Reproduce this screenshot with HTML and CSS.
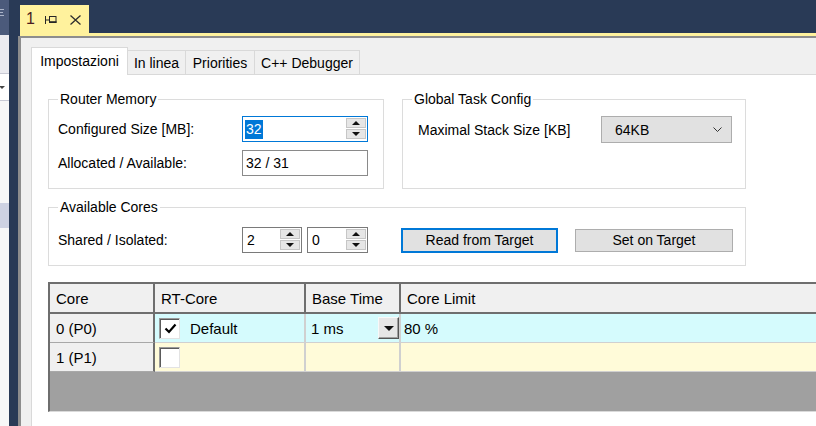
FILE: index.html
```html
<!DOCTYPE html>
<html lang="it">
<head>
<meta charset="utf-8">
<title>1</title>
<link rel="stylesheet" href="styles.css">
</head>
<body>
<div class="app">
  <div class="side">
    <div class="side-head">
      <svg class="side-glyph" width="4" height="7" viewBox="0 0 4 7"><path d="M0 0.5H4M0 3.5H3M0 6.5H4" stroke="#aab3c8" stroke-width="1"/></svg>
    </div>
    <div class="side-strip"></div>
    <div class="side-combo"><span class="side-arrow"></span></div>
    <div class="side-list"></div>
    <div class="side-sel"></div>
    <div class="side-rest"></div>
  </div>
  <div class="work">
    <div class="doctabs">
      <div class="doctab">
        <span class="doctab-title">1</span>
        <svg class="doctab-pin" width="12" height="8" viewBox="0 0 12 8"><path d="M0.5 0V8M0.5 4H4.5" stroke="#262626" stroke-width="1" fill="none"/><rect x="4.5" y="0.5" width="6.5" height="6" stroke="#262626" stroke-width="1" fill="none"/><path d="M4.5 6H11.5" stroke="#262626" stroke-width="1.6"/></svg>
        <svg class="doctab-close" width="11" height="10" viewBox="0 0 11 10"><path d="M0.5 0.5L10.5 9.5M10.5 0.5L0.5 9.5" stroke="#2e2e2e" stroke-width="1.3" fill="none"/></svg>
      </div>
    </div>
    <div class="doc-accent"></div>
    <div class="frame">
      <div class="tabstrip">
        <div class="tab tab-active">Impostazioni</div>
        <div class="tab tab-inline">In linea</div>
        <div class="tab tab-prio">Priorities</div>
        <div class="tab tab-debug">C++ Debugger</div>
      </div>
      <div class="page">
        <div class="groups-row">
          <div class="group group-router">
            <span class="legend">Router Memory</span>
            <div class="fields">
              <span class="label">Configured Size [MB]:</span>
              <div class="spin spin-focus spin-wide">
                <span class="spin-text"><span class="selected">32</span></span>
                <span class="spin-btns"><span class="spin-btn"><i class="tri-up"></i></span><span class="spin-btn"><i class="tri-down"></i></span></span>
              </div>
              <span class="label">Allocated / Available:</span>
              <div class="textbox">32 / 31</div>
            </div>
          </div>
          <div class="group group-task">
            <span class="legend">Global Task Config</span>
            <div class="fields fields-task">
              <span class="label">Maximal Stack Size [KB]</span>
              <div class="combo"><span>64KB</span><svg width="9" height="5" viewBox="0 0 9 5"><path d="M0.5 0.5L4.5 4.5L8.5 0.5" stroke="#333" stroke-width="1" fill="none"/></svg></div>
            </div>
          </div>
        </div>
        <div class="group group-cores">
          <span class="legend">Available Cores</span>
          <div class="cores-row">
            <span class="label label-cores">Shared / Isolated:</span>
            <div class="spin spin-small">
              <span class="spin-text">2</span>
              <span class="spin-btns"><span class="spin-btn"><i class="tri-up"></i></span><span class="spin-btn"><i class="tri-down"></i></span></span>
            </div>
            <div class="spin spin-small spin-second">
              <span class="spin-text">0</span>
              <span class="spin-btns"><span class="spin-btn"><i class="tri-up"></i></span><span class="spin-btn"><i class="tri-down"></i></span></span>
            </div>
            <button class="btn btn-default">Read from Target</button>
            <button class="btn btn-set">Set on Target</button>
          </div>
        </div>
        <div class="grid">
          <div class="grow ghead">
            <div class="cell c-core">Core</div>
            <div class="cell c-rt">RT-Core</div>
            <div class="cell c-base">Base Time</div>
            <div class="cell c-limit">Core Limit</div>
          </div>
          <div class="grow gbody row-cyan">
            <div class="cell c-core rowhead">0 (P0)</div>
            <div class="cell c-rt"><span class="check"><svg width="13" height="11" viewBox="0 0 13 11"><path d="M1.5 5.5L5 9L11.5 1.5" stroke="#000" stroke-width="2.2" fill="none"/></svg></span><span class="check-label">Default</span></div>
            <div class="cell c-base base-cell"><span>1 ms</span><span class="dd-btn"><i class="tri-down tri-big"></i></span></div>
            <div class="cell c-limit">80 %</div>
          </div>
          <div class="grow gbody row-yellow">
            <div class="cell c-core rowhead">1 (P1)</div>
            <div class="cell c-rt"><span class="check"></span></div>
            <div class="cell c-base"></div>
            <div class="cell c-limit"></div>
          </div>
        </div>
      </div>
    </div>
  </div>
</div>
</body>
</html>
```
FILE: styles.css
```css
* { box-sizing: border-box; }
html, body { margin: 0; padding: 0; }
body {
  width: 816px;
  height: 426px;
  overflow: hidden;
  font-family: "Liberation Sans", Arial, sans-serif;
  font-size: 14px;
  color: #000;
  background: #293a56;
}
.app { display: flex; height: 426px; }

/* left docked strip */
.side { width: 9px; display: flex; flex-direction: column; background: #f5f5f5; }
.side-head { height: 35px; background: #4b5a7b; padding: 9px 0 0 0; }
.side-glyph { display: block; }
.side-strip { height: 38px; background: #ebebf0; }
.side-combo {
  height: 28px; background: #fff;
  border-top: 1px solid #c8c9d4; border-bottom: 1px solid #c8c9d4;
  display: flex; align-items: center;
}
.side-arrow {
  width: 0; height: 0;
  border-left: 3px solid transparent; border-right: 3px solid transparent;
  border-top: 3px solid #444;
  margin-left: -1px;
}
.side-list { height: 102px; background: #f7f7f7; }
.side-sel { height: 25px; background: #ced2e2; }
.side-rest { flex: 1; background: #f7f7f7; }

/* work area */
.work { flex: 1; min-width: 0; display: flex; flex-direction: column; background: #293a56; }
.doctabs { height: 33px; padding: 5px 0 0 11px; display: flex; }
.doctab {
  width: 69px; height: 28px; background: #fff29d;
  display: flex; align-items: center; padding-left: 6px;
}
.doctab-title { font-size: 16px; color: #4a1c22; width: 19px; }
.doctab-pin { margin-top: 1px; }
.doctab-close { margin-left: 13px; margin-top: 1px; }
.doc-accent { height: 3px; margin-left: 11px; background: #fff29d; }
.frame {
  flex: 1; min-height: 0; overflow: hidden;
  margin-left: 9px;
  border-left: 3px solid #8d8d8d;
  border-top: 2px solid #8d8d8d;
  background: #f0f0f0;
  padding: 9px 0 0 10px;
  display: flex; flex-direction: column;
}

/* tab control */
.tabstrip { display: flex; align-items: flex-end; height: 27px; }
.tab {
  height: 24px; border: 1px solid #d9d9d9; border-bottom: none;
  background: #f0f0f0; margin-left: -1px;
  display: flex; align-items: center; justify-content: center;
  white-space: nowrap;
}
.tab-active {
  height: 28px; margin-bottom: -1px; margin-left: 0;
  width: 97px; background: #fff; position: relative; z-index: 1;
  padding-bottom: 2px;
}
.tab-inline { width: 59px; }
.tab-prio { width: 70px; }
.tab-debug { width: 106px; }
.page {
  flex: 1; background: #fff;
  border-top: 1px solid #d9d9d9; border-left: 1px solid #d9d9d9;
  padding: 24px 0 0 16px;
}

/* group boxes */
.groups-row { display: flex; gap: 18px; }
.group { border: 1px solid #dcdcdc; display: flex; flex-direction: column; align-items: flex-start; }
.group-router { width: 336px; height: 90px; }
.group-task { width: 344px; height: 90px; }
.group-cores { width: 698px; height: 59px; margin-top: 18px; }
.legend {
  margin: -9px 0 0 9px; padding: 0 2px;
  line-height: 16px; background: #fff;
}
.fields {
  display: grid; grid-template-columns: 184px auto;
  row-gap: 8px; align-items: center;
  margin: 9px 0 0 9px;
}
.fields-task { grid-template-columns: 183px auto; margin-left: 15px; }
.label { white-space: nowrap; }

/* spinner */
.spin {
  display: flex; height: 26px; border: 1px solid #7a7a7a; background: #fff; padding: 1px;
}
.spin-focus { border-color: #0078d7; }
.spin-wide { width: 126px; }
.spin-small { width: 60px; }
.spin-second { width: 61px; margin-left: 5px; }
.spin-text { flex: 1; display: flex; align-items: center; padding-left: 3px; }
.spin-wide .spin-text { padding-left: 1px; }
.selected { background: #0078d7; color: #fff; padding: 0 1px; line-height: 19px; }
.spin-btns { width: 20px; display: flex; flex-direction: column; gap: 1px; padding-bottom: 1px; }
.spin-btn {
  flex: 1; background: #e6e6e6; border: 1px solid #c6c6c6;
  display: flex; align-items: center; justify-content: center;
}
.tri-up, .tri-down { display: block; width: 0; height: 0; border-left: 4px solid transparent; border-right: 4px solid transparent; }
.tri-up { border-bottom: 4px solid #111; }
.tri-down { border-top: 4px solid #111; }

.textbox {
  width: 126px; height: 26px; border: 1px solid #8a8a8a;
  display: flex; align-items: center; padding-left: 3px;
}
.combo {
  width: 131px; height: 27px; background: #e1e1e1; border: 1px solid #adadad;
  display: flex; align-items: center; justify-content: space-between;
  padding: 0 9px 0 13px;
}

.cores-row { display: flex; align-items: center; margin: 12px 0 0 9px; }
.label-cores { width: 184px; }
.btn {
  font-family: "Liberation Sans", Arial, sans-serif; font-size: 14px; color: #000;
  background: #e1e1e1; border: 1px solid #adadad; padding: 0; margin: 0;
}
.btn-default { width: 157px; height: 25px; border: 2px solid #0078d7; margin-left: 33px; }
.btn-set { width: 158px; height: 23px; margin-left: 17px; }

/* data grid */
.grid {
  margin-top: 16px; width: 790px; height: 130px;
  border-top: 2px solid #6e6e6e; border-left: 2px solid #6e6e6e;
  border-bottom: 1px solid #dadada;
  background: #a0a0a0;
  display: flex; flex-direction: column;
  font-size: 15px;
}
.grow { display: flex; }
.ghead { height: 30px; background: #f0f0f0; border-bottom: 2px solid #6e6e6e; }
.cell { display: flex; align-items: center; padding-left: 6px; white-space: nowrap; }
.c-core { width: 105px; }
.c-rt { width: 151px; }
.c-base { width: 95px; }
.c-limit { flex: 1; }
.ghead .cell { border-right: 2px solid #6e6e6e; }
.ghead .c-limit { border-right: none; }
.gbody { height: 29px; }
.gbody .cell { border-right: 2px solid #d0d0d0; border-bottom: 1px solid #d0d0d0; padding-left: 5px; }
.gbody .c-limit { border-right: none; padding-left: 3px; }
.gbody .rowhead { background: #f0f0f0; border-right: 2px solid #6e6e6e; border-bottom: 1px solid #a8a8a8; padding-left: 6px; }
.row-cyan { background: #d5fbfd; }
.row-yellow { background: #fffbd9; }
.gbody .c-rt { padding-left: 4px; }
.check {
  width: 21px; height: 21px; background: #fff;
  border: 1px solid; border-color: #9a9a9a #e3e3e3 #e3e3e3 #9a9a9a;
  box-shadow: inset 1px 1px 0 #5a5a5a;
  display: flex; align-items: center; justify-content: center;
  padding: 1px 0 0 1px;
}
.check-label { margin-left: 10px; }
.base-cell { justify-content: space-between; }
.gbody .base-cell { padding-right: 0; }
.dd-btn {
  width: 21px; height: 22px; background: #e6e6e6;
  border: 1px solid; border-color: #f8f8f8 #555 #555 #f8f8f8;
  box-shadow: inset -1px -1px 0 #a0a0a0;
  display: flex; align-items: center; justify-content: center;
}
.tri-big { border-left-width: 5px; border-right-width: 5px; border-top-width: 5px; }
```
